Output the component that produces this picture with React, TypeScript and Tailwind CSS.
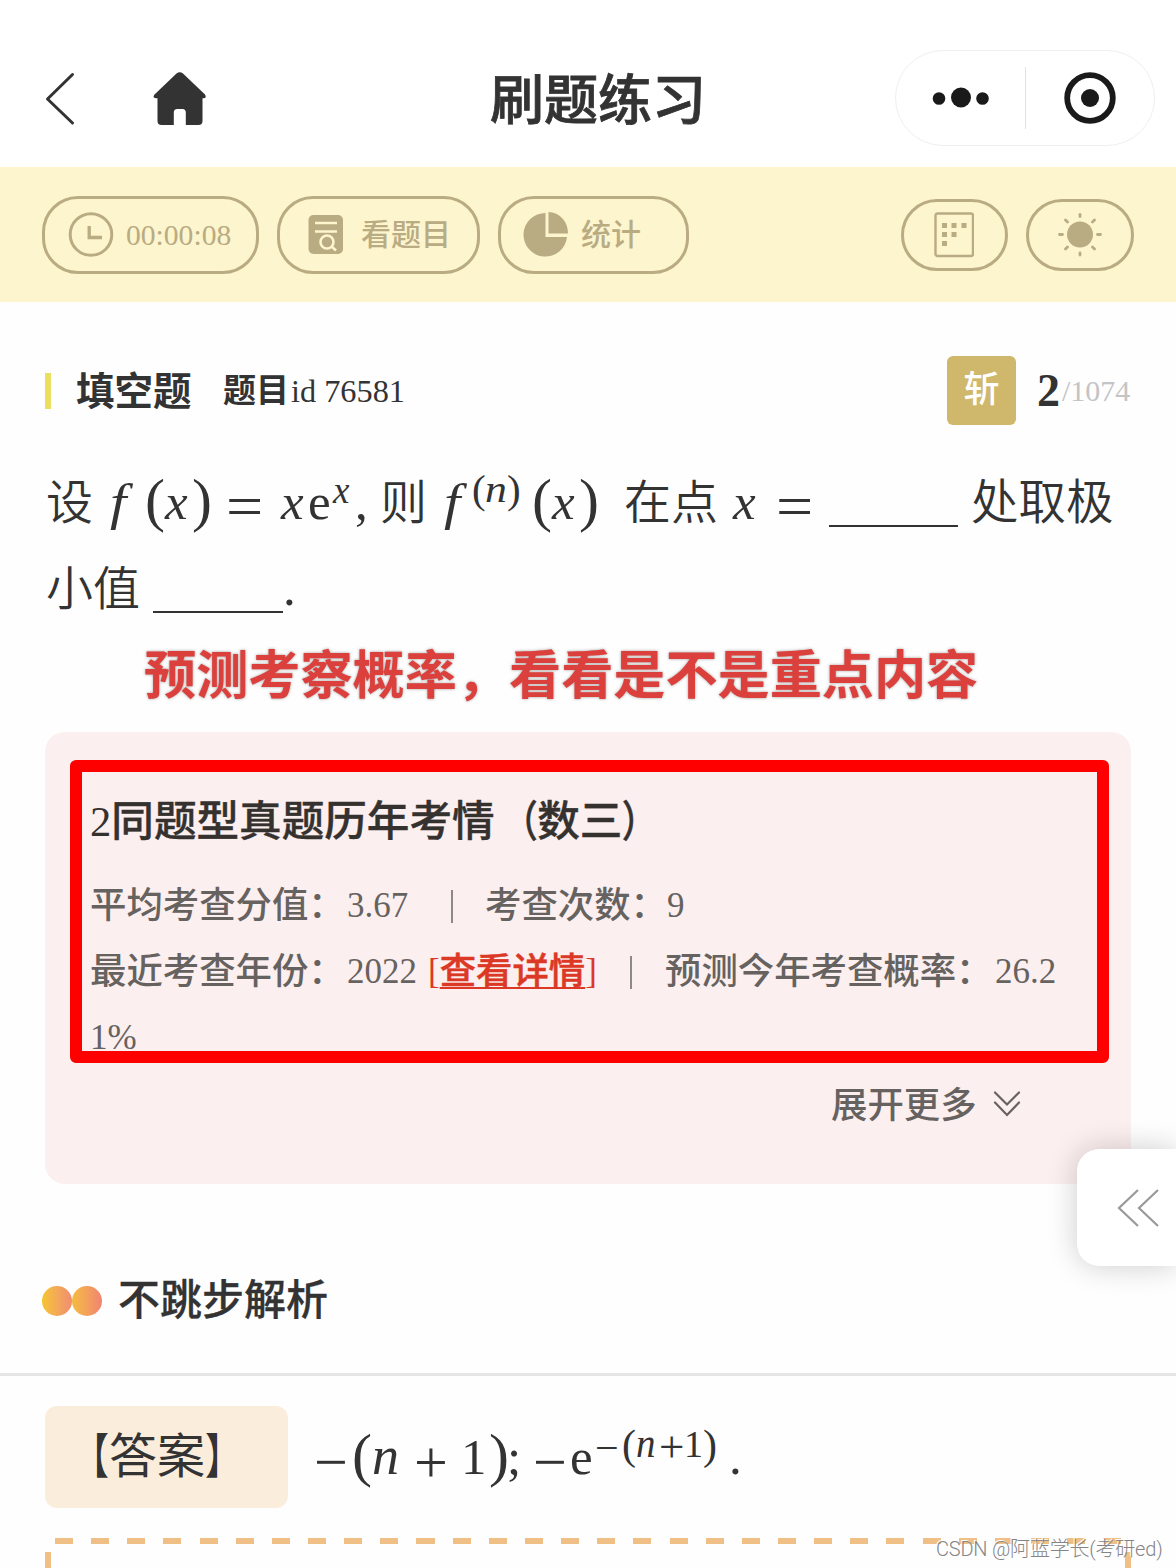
import React from 'react';

const CJK = "font-['Liberation_Serif','Noto_Sans_CJK_SC',sans-serif]";

function Tk({ c, children }: { c: string; children?: React.ReactNode }) {
  return <span className={`block shrink-0 whitespace-nowrap leading-none ${c}`}>{children}</span>;
}

function Header() {
  return (
    <header className="flex h-[167px] items-start bg-white text-[#333]">
      <svg className="ml-[44px] mt-[71px] h-[56px] w-[32px] shrink-0" viewBox="0 0 32 56" fill="none" stroke="#333" strokeWidth="3" strokeLinecap="round" strokeLinejoin="round">
        <path d="M28.500 3.500 3.500 28 28.500 52" />
      </svg>
      <svg className="ml-[76px] mt-[71px] h-[56px] w-[56px] shrink-0" viewBox="0 0 56 56" fill="#333">
        <path d="M24.500 2.500Q27.700-.2 31 2.500L53 23.500Q55 27.300 51.500 27.300H50.500V50Q50.500 54 46.500 54H33.800V41.500Q33.800 38 30.500 38H25.200Q21.800 38 21.800 41.500V54H9.500Q5.500 54 5.500 50V27.300H4Q0 27.300 2.500 23.500Z" />
      </svg>
      <h1 className="ml-[282px] mt-[75px] w-[216px] whitespace-nowrap text-[54px] font-medium leading-[54px] [-webkit-text-stroke:0.8px_#333]">刷题练习</h1>
      <div className="ml-[189px] mt-[50px] flex h-[96px] w-[260px] shrink-0 items-center rounded-full border border-[#efefef]">
        <svg className="ml-[35px] h-[24px] w-[60px]" viewBox="0 0 60 24" fill="#1a1a1a">
          <circle cx="8" cy="12.500" r="6.300" />
          <circle cx="30" cy="11.500" r="10" />
          <circle cx="51.500" cy="12.500" r="6.300" />
        </svg>
        <div className="ml-[34px] h-[62px] w-px bg-[#e2e2e2]" />
        <svg className="ml-[37px] h-[54px] w-[54px]" viewBox="0 0 54 54">
          <circle cx="27" cy="27" r="22.800" fill="none" stroke="#1a1a1a" strokeWidth="5.800" />
          <circle cx="27" cy="27" r="9" fill="#1a1a1a" />
        </svg>
      </div>
    </header>
  );
}

function Toolbar() {
  return (
    <nav className="flex h-[135px] items-center bg-[#fdf5ce] pl-[42px] text-[30px] font-medium text-[#b9ab82]">
      <div className="flex h-[78px] w-[217px] items-center rounded-[36px] border-[3px] border-[#b9ab82] pl-[23px]">
        <svg className="h-[46px] w-[46px]" viewBox="0 0 46 46" fill="none" stroke="#b9ab82" strokeWidth="3">
          <circle cx="23" cy="22.500" r="20.800" />
          <path d="M21.200 14V25.500H34" strokeWidth="3.300" />
        </svg>
        <span className="ml-[12px] text-[29.600px] font-normal leading-[30px]">00:00:08</span>
      </div>
      <div className="ml-[18px] flex h-[78px] w-[203px] items-center rounded-[36px] border-[3px] border-[#b9ab82] pl-[28px]">
        <svg className="h-[40px] w-[36px]" viewBox="0 0 36 40">
          <rect x=".5" y=".0" width="34.500" height="39" rx="5" fill="#b9ab82" />
          <g fill="none" stroke="#fdf5ce" strokeWidth="2.600">
            <path d="M7 8H29M7 16.500H29" />
            <circle cx="19" cy="27" r="6.500" />
            <path d="m23.500 31.500 4.500 4" />
          </g>
        </svg>
        <span className="ml-[17px] leading-[36px]">看题目</span>
      </div>
      <div className="ml-[18px] flex h-[78px] w-[191px] items-center rounded-[36px] border-[3px] border-[#b9ab82] pl-[22px]">
        <svg className="h-[46px] w-[46px]" viewBox="0 0 46 46" fill="#b9ab82">
          <path d="M22.500 1A21.800 21.800 0 1 0 44 25H22.500Z" />
          <path d="M25.500 0A20 21 0 0 1 45 21.500H25.500Z" />
        </svg>
        <span className="ml-[12px] leading-[36px]">统计</span>
      </div>
      <div className="ml-[212px] flex h-[72px] w-[107px] items-center justify-center rounded-[36px] border-[3px] border-[#b9ab82]">
        <svg className="h-[46px] w-[40px] -translate-x-px" viewBox="0 0 40 46" fill="#b9ab82">
          <rect x="1.500" y="1.500" width="37.500" height="42.500" rx="2" fill="none" stroke="#b9ab82" strokeWidth="2.400" />
          <path d="M8 11h5v5H8zM17.500 11h5v5h-5zM27.500 11h5v5h-5zM8 20h5v5H8zM17.500 20h5v5h-5zM8 29h5v5H8z" />
        </svg>
      </div>
      <div className="ml-[18px] flex h-[72px] w-[108px] items-center justify-center rounded-[36px] border-[3px] border-[#b9ab82]">
        <svg className="h-[46px] w-[46px]" viewBox="0 0 46 46" stroke="#b9ab82" strokeWidth="2.800" strokeLinecap="round">
          <circle cx="23" cy="22.500" r="13" fill="#b9ab82" stroke="none" />
          <path d="M23 2.500v2M23 41v2M2.500 22.500h3M40.500 22.500h3M8.500 8l2 2M37.500 8l-2 2M8.500 37l2-2M37.500 37l-2-2" />
        </svg>
      </div>
    </nav>
  );
}

function Question() {
  return (
    <section className="text-[#333]">
      <div className="flex h-[69px] items-center pl-[45px]">
        <div className="h-[36px] w-[6px] bg-[#ebdf60]" />
        <span className="ml-[25px] w-[147px] whitespace-nowrap pt-[2px] text-[38.500px] font-bold leading-[40px]">填空题</span>
        <span className="w-[68px] whitespace-nowrap text-[33px] font-bold leading-[40px]">题目</span>
        <span className="w-[656px] text-[32.300px] leading-[40px]">id 76581</span>
        <div className="flex h-[69px] w-[69px] shrink-0 items-center justify-center rounded-[6px] bg-[#cfb86c] pb-px text-[36px] font-medium leading-none text-white">斩</div>
        <span className="ml-[21px] text-[46px] font-bold leading-[40px]">2</span>
        <span className="ml-[2px] text-[30px] leading-[40px] text-[#c4c4c4]">/1074</span>
      </div>

      <div className="mt-[44px] flex h-[86px] items-baseline pl-[46px] text-[51px]">
        <Tk c="w-[64px] text-[47px] font-[350]">设</Tk>
        <Tk c="w-[35px] origin-left scale-x-115 italic">f</Tk>
        <Tk c="w-[20px] text-[60px] translate-y-[1px]">(</Tk>
        <Tk c="w-[27px] italic">x</Tk>
        <Tk c="w-[34px] text-[60px] translate-y-[1px]">)</Tk>
        <Tk c="w-[55px] origin-left scale-x-110 text-[60px] translate-y-[7px]">=</Tk>
        <Tk c="w-[27px] italic">x</Tk>
        <Tk c="w-[25px]">e</Tk>
        <Tk c="w-[22px] text-[37px] italic -translate-y-[16px]">x</Tk>
        <Tk c="w-[25px]">,</Tk>
        <Tk c="w-[64px] text-[47px] font-[350]">则</Tk>
        <Tk c="w-[28px] origin-left scale-x-115 italic">f</Tk>
        <Tk c="w-[13px] text-[41px] -translate-y-[16px]">(</Tk>
        <Tk c="w-[22px] origin-left scale-x-115 text-[38px] italic -translate-y-[17px]">n</Tk>
        <Tk c="w-[25px] text-[41px] -translate-y-[16px]">)</Tk>
        <Tk c="w-[20px] text-[60px] translate-y-[1px]">(</Tk>
        <Tk c="w-[27px] italic">x</Tk>
        <Tk c="w-[45px] text-[60px] translate-y-[1px]">)</Tk>
        <Tk c="w-[109px] text-[47px] font-[350]">在点</Tk>
        <Tk c="w-[43px] italic">x</Tk>
        <Tk c="w-[53px] origin-left scale-x-110 text-[60px] translate-y-[7px]">=</Tk>
        <Tk c="h-[8px] w-[129px] border-b-2 border-[#333] translate-y-[8px]" />
        <Tk c="ml-[13px] text-[47.500px] font-[350]">处取极</Tk>
      </div>
      <div className="mt-[8px] flex h-[62px] items-baseline pl-[46px] text-[51px]">
        <Tk c="w-[107px] text-[47px] font-[350]">小值</Tk>
        <Tk c="h-[8px] w-[130px] border-b-2 border-[#333] translate-y-[8px]" />
        <Tk c="w-[20px]">.</Tk>
      </div>
    </section>
  );
}

function ExamPanel() {
  return (
    <section className="mx-[45px] mt-[27px] h-[452px] rounded-[20px] bg-[#fcefef] pl-[25px] pt-[28px] text-[#666260]">
      <div className="h-[303px] w-[1039px] rounded-[6px] border-[12px] border-[#fe0000] pl-[8px] pt-[18px]">
        <div className="flex h-[64px] items-center whitespace-nowrap text-[42.600px] font-medium text-[#34312f]">
          <span className="font-normal">2</span>
          <span className="[-webkit-text-stroke:0.4px_#34312f]">同题型真题历年考情</span>
          <span className="origin-right scale-x-80 [-webkit-text-stroke:0.7px_#34312f]">（</span>
          <span className="[-webkit-text-stroke:0.4px_#34312f]">数三</span>
          <span className="origin-left scale-x-80 [-webkit-text-stroke:0.7px_#34312f]">）</span>
        </div>
        <div className="mt-[19px] flex h-[66px] items-center whitespace-nowrap text-[36.400px] font-medium">
          <span className="w-[257px]">平均考查分值：</span>
          <span className="w-[104px] text-[35px] font-normal">3.67</span>
          <span className="h-[33px] w-[2px] bg-[#8d8987]" />
          <span className="ml-[32px] w-[182px]">考查次数：</span>
          <span className="text-[35px] font-normal">9</span>
        </div>
        <div className="flex h-[66px] items-center whitespace-nowrap text-[36.400px] font-medium">
          <span className="w-[257px]">最近考查年份：</span>
          <span className="w-[81px] text-[35px] font-normal">2022</span>
          <span className="flex w-[202px] items-center text-[#dc3826]">
            <span className="text-[35px] font-normal">[</span>
            <span className="underline decoration-2 underline-offset-[3px] [-webkit-text-stroke:0.5px_#dc3826]">查看详情</span>
            <span className="text-[35px] font-normal">]</span>
          </span>
          <span className="h-[33px] w-[2px] bg-[#8d8987]" />
          <span className="ml-[33px] w-[330px]">预测今年考查概率：</span>
          <span className="text-[35px] font-normal">26.2</span>
        </div>
        <div className="flex h-[46px] items-center pt-[20px] text-[35px] leading-[66px]">1%</div>
      </div>
      <div className="mt-[14px] flex h-[58px] items-center pl-[761px] text-[36.400px] font-medium">
        <span>展开更多</span>
        <svg className="mb-[4px] ml-[15px] h-[28px] w-[30px]" viewBox="0 0 30 28" fill="none" stroke="#666260" strokeWidth="2.200" strokeLinecap="round">
          <path d="M3 2.500 15 14.500 27 2.500M3 12.500 15 25 27 12.500" />
        </svg>
      </div>
    </section>
  );
}

function Answer() {
  return (
    <section className="text-[#333]">
      <div className="mt-[85px] flex h-[64px] items-center pl-[42px]">
        <span className="h-[30px] w-[30px] rounded-full bg-linear-to-r from-[#f6c42a] to-[#f08c70]" />
        <span className="h-[30px] w-[30px] rounded-full bg-linear-to-r from-[#f5bc3c] to-[#f08470]" />
        <h2 className="ml-[16px] text-[42px] font-medium leading-[60px] [-webkit-text-stroke:0.3px_#333]">不跳步解析</h2>
      </div>
      <div className="mt-[40px] h-[3px] bg-[#e5e5e5]" />
      <div className="mt-[30px] flex h-[102px] pl-[45px]">
        <div className="flex h-[102px] w-[243px] shrink-0 items-center rounded-[12px] bg-[#fbeddc] pl-[16px] text-[48px] leading-[60px]">
          <span className="origin-right scale-x-75">【</span>
          <span>答案</span>
          <span className="origin-left scale-x-75">】</span>
        </div>
        <div className="ml-[26px] mt-[18px] flex h-[70px] items-baseline text-[51px]">
          <Tk c="w-[38px] text-[60px] translate-y-[8px]">−</Tk>
          <Tk c="w-[20px] text-[60px] translate-y-[1px]">(</Tk>
          <Tk c="w-[42px] text-[54px] italic">n</Tk>
          <Tk c="w-[47px] text-[60px] translate-y-[8px]">+</Tk>
          <Tk c="w-[28px]">1</Tk>
          <Tk c="w-[18px] text-[60px] translate-y-[1px]">)</Tk>
          <Tk c="w-[26px]">;</Tk>
          <Tk c="w-[37px] text-[60px] translate-y-[8px]">−</Tk>
          <Tk c="w-[25px]">e</Tk>
          <Tk c="w-[27px] text-[42px] -translate-y-[12px]">−</Tk>
          <Tk c="w-[14px] text-[42px] -translate-y-[15px]">(</Tk>
          <Tk c="w-[23px] text-[39px] italic -translate-y-[17px]">n</Tk>
          <Tk c="w-[25px] text-[45px] -translate-y-[12px]">+</Tk>
          <Tk c="w-[19px] text-[38px] -translate-y-[17px]">1</Tk>
          <Tk c="w-[26px] text-[42px] -translate-y-[15px]">)</Tk>
          <Tk c="w-[20px]">.</Tk>
        </div>
      </div>
      <div className="mx-[45px] mt-[30px]">
        <div className="ml-[10px] h-[6px] w-[1066px] bg-[repeating-linear-gradient(90deg,#efbf86_0_18px,transparent_18px_36.150px)]" />
        <div className="mt-[8px] flex h-[16px] justify-between">
          <div className="w-[6px] bg-[#efbf86]" />
          <div className="w-[6px] bg-[#efbf86]" />
        </div>
      </div>
    </section>
  );
}

export default function App() {
  return (
    <main className={`relative h-[1568px] w-[1176px] overflow-hidden bg-[#fefefe] ${CJK}`}>
      <Header />
      <Toolbar />
      <div className="h-[54px]" />
      <Question />
      <div className="mt-[24px] flex h-[56px] items-center whitespace-nowrap pl-[144px] text-[52.150px] font-bold leading-[56px] text-[#db403d] [text-shadow:0_0_3px_rgba(70,50,50,0.5)]">
        预测考察概率，看看是不是重点内容
      </div>
      <ExamPanel />
      <Answer />
      <div className="absolute right-0 top-[1149px] flex h-[117px] w-[99px] items-center rounded-l-[22px] bg-white pl-[40px] shadow-[0_0_30px_rgba(0,0,0,0.2)]">
        <svg className="h-[40px] w-[44px]" viewBox="0 0 44 40" fill="none" stroke="#999" strokeWidth="2.200">
          <path d="M21 2 2 20 21 38M41 2 22 20 41 38" />
        </svg>
      </div>
      <div className="absolute left-[936px] top-[1535px] whitespace-nowrap font-['Roboto','Noto_Sans_CJK_SC',sans-serif] text-[20px] font-light leading-[28px] tracking-[-0.2px] text-[#858585] [text-shadow:-1px_-1px_0_#fff]">
        CSDN @阿蓝学长(考研ed)
      </div>
    </main>
  );
}
